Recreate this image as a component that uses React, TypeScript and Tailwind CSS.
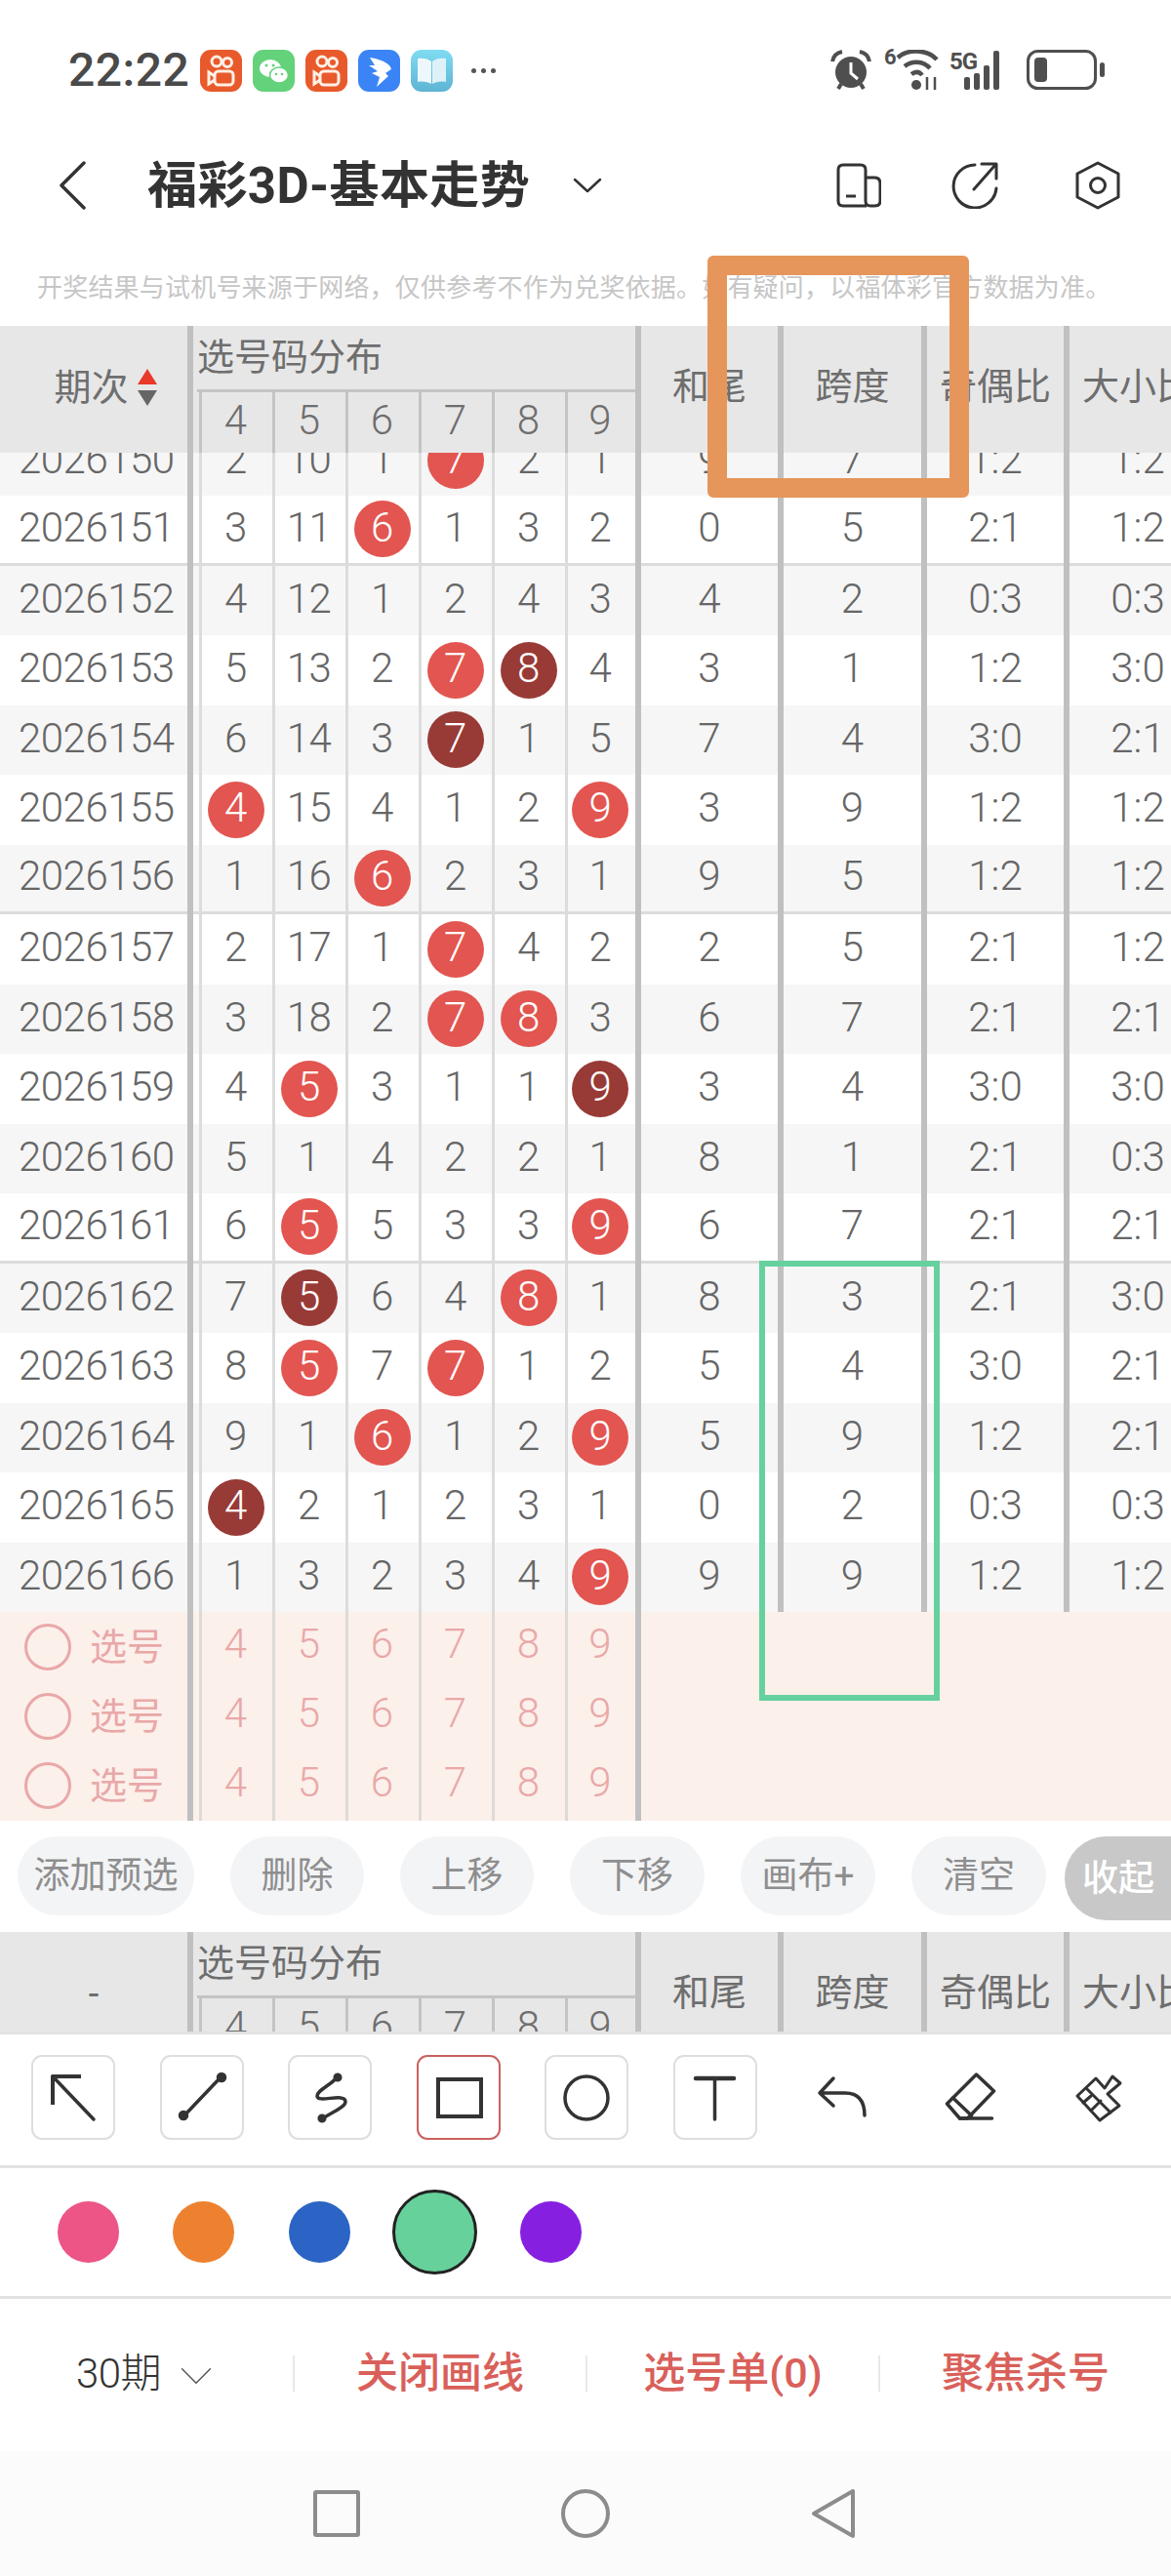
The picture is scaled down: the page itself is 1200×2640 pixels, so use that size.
import React from 'react';

type Mark = '' | 'r' | 'd';
type Row = { no: string; nums: string[]; marks: Record<number, Mark>; sum: string; span: string; odd: string; big: string; line?: boolean };

const mk = (no: string, nums: string, marks: Record<number, Mark>, sum: string, span: string, odd: string, big: string, line = false): Row => ({
  no, nums: nums.split(' '), marks, sum, span, odd, big, line,
});

const rows: Row[] = [
  mk('2026150', '2 10 1 7 2 1', { 3: 'r' }, '9', '7', '1:2', '1:2'),
  mk('2026151', '3 11 6 1 3 2', { 2: 'r' }, '0', '5', '2:1', '1:2', true),
  mk('2026152', '4 12 1 2 4 3', {}, '4', '2', '0:3', '0:3'),
  mk('2026153', '5 13 2 7 8 4', { 3: 'r', 4: 'd' }, '3', '1', '1:2', '3:0'),
  mk('2026154', '6 14 3 7 1 5', { 3: 'd' }, '7', '4', '3:0', '2:1'),
  mk('2026155', '4 15 4 1 2 9', { 0: 'r', 5: 'r' }, '3', '9', '1:2', '1:2'),
  mk('2026156', '1 16 6 2 3 1', { 2: 'r' }, '9', '5', '1:2', '1:2', true),
  mk('2026157', '2 17 1 7 4 2', { 3: 'r' }, '2', '5', '2:1', '1:2'),
  mk('2026158', '3 18 2 7 8 3', { 3: 'r', 4: 'r' }, '6', '7', '2:1', '2:1'),
  mk('2026159', '4 5 3 1 1 9', { 1: 'r', 5: 'd' }, '3', '4', '3:0', '3:0'),
  mk('2026160', '5 1 4 2 2 1', {}, '8', '1', '2:1', '0:3'),
  mk('2026161', '6 5 5 3 3 9', { 1: 'r', 5: 'r' }, '6', '7', '2:1', '2:1', true),
  mk('2026162', '7 5 6 4 8 1', { 1: 'd', 4: 'r' }, '8', '3', '2:1', '3:0'),
  mk('2026163', '8 5 7 7 1 2', { 1: 'r', 3: 'r' }, '5', '4', '3:0', '2:1'),
  mk('2026164', '9 1 6 1 2 9', { 2: 'r', 5: 'r' }, '5', '9', '1:2', '2:1'),
  mk('2026165', '4 2 1 2 3 1', { 0: 'd' }, '0', '2', '0:3', '0:3'),
  mk('2026166', '1 3 2 3 4 9', { 5: 'r' }, '9', '9', '1:2', '1:2'),
];

const heads = ['4', '5', '6', '7', '8', '9'];

function Sep() {
  return <div className="w-[6px] shrink-0 self-stretch bg-[#c0c0c0]" />;
}

function TableHead({ first }: { first: React.ReactNode }) {
  return (
    <div className="flex h-[130px] w-[1200px] shrink-0 bg-[#e7e7e7] text-[38px] leading-none text-[#6e6e6e]">
      <div className="flex w-[192px] shrink-0 items-center justify-center pb-[4px]">{first}</div>
      <Sep />
      <div className="flex w-[453px] shrink-0 flex-col">
        <div className="flex h-[65px] items-center pb-[2px] pl-[4px]">选号码分布</div>
        <div className="ml-[4px] h-[3px] bg-[#c4c4c4]" />
        <div className="ml-[6px] flex flex-1 text-[42px] font-light">
          {heads.map((h, i) => (
            <div key={h} className={`flex items-center justify-center border-l-[3px] border-[#c4c4c4] pb-[5px] pr-[3px] ${i === 5 ? 'w-[72px]' : 'w-[75px]'}`}>
              {h}
            </div>
          ))}
        </div>
      </div>
      <Sep />
      <HeadCell w="w-[140px]">和尾</HeadCell>
      <Sep />
      <HeadCell w="w-[141px]">跨度</HeadCell>
      <Sep />
      <HeadCell w="w-[140px]">奇偶比</HeadCell>
      <Sep />
      <HeadCell w="w-[140px]">大小比</HeadCell>
    </div>
  );
}

function HeadCell({ w, children }: { w: string; children: React.ReactNode }) {
  return <div className={`flex shrink-0 items-center justify-center whitespace-nowrap pb-[6px] ${w}`}>{children}</div>;
}

function DataRow({ row, index }: { row: Row; index: number }) {
  const bg = index % 2 === 0 ? 'bg-[#f6f6f6]' : 'bg-white';
  const line = row.line ? 'border-b-[3px] border-b-[#dcdcdc]' : '';
  const val = `flex shrink-0 items-center justify-center pb-[3px] ${line}`;
  return (
    <div className={`flex h-[71.5px] w-[1200px] text-[42px] font-light leading-none text-[#666] ${bg}`}>
      <div className={`flex w-[192px] shrink-0 items-center pb-[3px] pl-[19px] tracking-[-0.5px] ${line}`}>{row.no}</div>
      <Sep />
      <div className={`w-[6px] shrink-0 ${line}`} />
      {row.nums.map((n, i) => {
        const m = row.marks[i];
        return (
          <div key={i} className={`flex shrink-0 items-center justify-center border-l-[3px] border-l-[#dcdcdc] pr-[3px] tracking-[-0.5px] ${i === 5 ? 'w-[72px]' : 'w-[75px]'} ${line}`}>
            {m ? (
              <span className={`flex h-[58px] w-[58px] shrink-0 items-center justify-center rounded-full pb-[3px] text-white ${m === 'r' ? 'bg-[#e25550]' : 'bg-[#983a36]'}`}>{n}</span>
            ) : (
              <span className="pb-[3px]">{n}</span>
            )}
          </div>
        );
      })}
      <Sep />
      <div className={`w-[140px] ${val}`}>{row.sum}</div>
      <Sep />
      <div className={`w-[141px] ${val}`}>{row.span}</div>
      <Sep />
      <div className={`w-[140px] ${val}`}>{row.odd}</div>
      <Sep />
      <div className={`w-[104px] pl-[36px] ${val}`}>{row.big}</div>
    </div>
  );
}

function PickRow() {
  return (
    <div className="flex h-[71.33px] w-[657px] text-[38px] font-light leading-none text-[#e9a8a8]">
      <div className="flex w-[192px] shrink-0 items-center pl-[25px]">
        <span className="h-[48px] w-[48px] shrink-0 rounded-full border-[3px] border-[#e9a8a8]" />
        <span className="ml-[19px] font-normal">选号</span>
      </div>
      <Sep />
      <div className="w-[6px] shrink-0" />
      {heads.map((h, i) => (
        <div key={h} className={`flex shrink-0 items-center justify-center border-l-[3px] border-l-[#dedad7] pb-[6px] pr-[3px] text-[42px] ${i === 5 ? 'w-[72px]' : 'w-[75px]'}`}>
          {h}
        </div>
      ))}
      <Sep />
    </div>
  );
}

function AppTile({ className, children }: { className: string; children: React.ReactNode }) {
  return (
    <div className={`h-[43px] w-[43px] shrink-0 overflow-hidden rounded-[11px] ${className}`}>
      <svg viewBox="0 0 43 43" className="h-full w-full">{children}</svg>
    </div>
  );
}

function KuaiIcon() {
  return (
    <AppTile className="bg-[#e85a2c]">
      <g fill="none" stroke="#fff0e6" strokeWidth="3">
        <circle cx="17" cy="12" r="5" />
        <circle cx="28" cy="13" r="4.5" />
        <rect x="15" y="22" width="19" height="14" rx="4" />
        <path d="M15 27 L9 23 V35 L15 31" />
      </g>
    </AppTile>
  );
}

function ToolBtn({ active, children }: { active?: boolean; children: React.ReactNode }) {
  return (
    <div className={`h-[87px] w-[86px] shrink-0 rounded-[11px] border-2 ${active ? 'border-[#c9625f]' : 'border-[#dedede]'}`}>
      <svg viewBox="0 0 86 87" className="-m-[2px] h-[87px] w-[86px]" fill="none" stroke="#333" strokeWidth="3.5" strokeLinecap="round" strokeLinejoin="round">
        {children}
      </svg>
    </div>
  );
}

function FreeIcon({ children }: { children: React.ReactNode }) {
  return (
    <div className="h-[87px] w-[86px] shrink-0">
      <svg viewBox="0 0 86 87" className="h-[87px] w-[86px]" fill="none" stroke="#333" strokeWidth="3.5" strokeLinecap="round" strokeLinejoin="round">
        {children}
      </svg>
    </div>
  );
}

const chips = [
  { t: '添加预选', w: 'w-[181px]' },
  { t: '删除', w: 'w-[137px]' },
  { t: '上移', w: 'w-[137px]' },
  { t: '下移', w: 'w-[138px]' },
  { t: '画布+', w: 'w-[138px]' },
  { t: '清空', w: 'w-[138px]' },
];

export default function App() {
  return (
    <div className="relative flex h-[2640px] w-[1200px] flex-col overflow-hidden bg-white font-['Roboto','Noto_Sans_CJK_SC',sans-serif]">
      {/* status bar */}
      <div className="flex h-[144px] shrink-0 items-center pl-[70px] pr-[68px]">
        <span className="w-[135px] shrink-0 text-[48px] font-medium leading-none tracking-[0.5px] text-[#4a4a4a]">22:22</span>
        <div className="flex gap-[11px]">
          <KuaiIcon />
          <AppTile className="bg-[#63d27a]">
            <ellipse cx="18" cy="19" rx="11" ry="9" fill="#fff" />
            <ellipse cx="27" cy="26" rx="9.5" ry="8" fill="#fff" stroke="#63d27a" strokeWidth="1.5" />
            <circle cx="14" cy="16" r="1.5" fill="#63d27a" />
            <circle cx="21" cy="16" r="1.5" fill="#63d27a" />
            <circle cx="24" cy="25" r="1.3" fill="#63d27a" />
            <circle cx="30" cy="25" r="1.3" fill="#63d27a" />
          </AppTile>
          <KuaiIcon />
          <AppTile className="bg-[#3a84f5]">
            <path d="M12 8 C20 9 33 13 34 20 L28 24 L31 27 L19 38 L22 28 L14 24 L20 22 L11 16 L17 16 Z" fill="#fff" />
          </AppTile>
          <AppTile className="bg-gradient-to-b from-[#7fdcf2] to-[#5fb4d4]">
            <path d="M7 9 C12 8 18 9 21 12 V35 C18 33 12 32 7 33 Z" fill="#eef8fc" />
            <path d="M36 9 C31 8 25 9 22 12 V35 C25 33 31 32 36 33 Z" fill="#dff1f8" />
          </AppTile>
        </div>
        <div className="ml-[19px] flex gap-[5px]">
          <span className="h-[5px] w-[5px] rounded-full bg-[#555]" />
          <span className="h-[5px] w-[5px] rounded-full bg-[#555]" />
          <span className="h-[5px] w-[5px] rounded-full bg-[#555]" />
        </div>

        <svg viewBox="0 0 42 42" className="ml-auto h-[42px] w-[42px] shrink-0">
          <circle cx="21" cy="23" r="16" fill="#4f4f4f" />
          <path d="M21 13 V24 L28 30" fill="none" stroke="#fff" strokeWidth="3" />
          <path d="M2 12 C3 6 7 3 12 2 M40 12 C39 6 35 3 30 2" fill="none" stroke="#4f4f4f" strokeWidth="4" />
          <path d="M8 40 L11 35 M34 40 L31 35" stroke="#4f4f4f" strokeWidth="4" />
        </svg>
        <div className="relative ml-[13px] h-[42px] w-[56px] shrink-0">
          <span className="absolute left-0 top-[-3px] text-[22px] font-bold leading-none text-[#4f4f4f]">6</span>
          <svg viewBox="0 0 56 42" className="h-[42px] w-[56px]" fill="none" stroke="#4f4f4f">
            <path d="M14 8 C24 -1 44 -1 54 10" strokeWidth="4.5" />
            <path d="M21 17 C28 11 40 11 47 19" strokeWidth="4.5" />
            <path d="M28 25 C32 22 36 22 39 26" strokeWidth="4.5" />
            <circle cx="33" cy="36" r="5" fill="#4f4f4f" stroke="none" />
            <path d="M44 28 V41 M52 28 V41" strokeWidth="2.5" />
          </svg>
        </div>
        <div className="relative ml-[11px] h-[42px] w-[62px] shrink-0">
          <span className="absolute left-0 top-0 text-[24px] font-bold leading-none tracking-[-1px] text-[#4f4f4f]">5G</span>
          <svg viewBox="0 0 62 42" className="h-[42px] w-[62px]" fill="#4f4f4f">
            <rect x="15" y="28" width="6" height="13" rx="2" />
            <rect x="25" y="24" width="6" height="17" rx="2" />
            <rect x="35" y="16" width="6" height="25" rx="2" />
            <rect x="45" y="1" width="6" height="40" rx="2" />
          </svg>
        </div>
        <svg viewBox="0 0 80 42" className="ml-[17px] h-[42px] w-[80px] shrink-0">
          <rect x="1.5" y="1.5" width="69" height="38" rx="10" fill="none" stroke="#4f4f4f" strokeWidth="3" />
          <rect x="8" y="8" width="13" height="25" rx="4" fill="#4f4f4f" />
          <rect x="75" y="13" width="5" height="15" rx="2.5" fill="#4f4f4f" />
        </svg>
      </div>

      {/* title bar */}
      <div className="flex h-[92px] shrink-0 items-center pl-[60px] pr-[52px]">
        <svg viewBox="0 0 28 50" className="h-[50px] w-[28px] shrink-0" fill="none" stroke="#333" strokeWidth="3.5" strokeLinecap="round" strokeLinejoin="round">
          <path d="M26 2 L3 25 L26 48" />
        </svg>
        <span className="ml-[63px] whitespace-nowrap text-[51px] font-bold leading-none tracking-[0.4px] text-[#333]">福彩3D-基本走势</span>
        <svg viewBox="0 0 30 16" className="ml-[44px] h-[16px] w-[30px] shrink-0" fill="none" stroke="#333" strokeWidth="2.5" strokeLinecap="round" strokeLinejoin="round">
          <path d="M2 2 L15 14 L28 2" />
        </svg>
        <svg viewBox="0 0 46 46" className="ml-auto h-[46px] w-[46px] shrink-0" fill="none" stroke="#333" strokeWidth="3">
          <path d="M31 44 H7 Q2 44 2 39 V7 Q2 2 7 2 H25 Q30 2 30 7 V39 Q30 44 35 44 H39 Q45 44 45 39 V21 Q45 15 39 15 H30" />
          <path d="M10 34 H20" />
        </svg>
        <svg viewBox="0 0 48 48" className="ml-[72px] h-[48px] w-[48px] shrink-0" fill="none" stroke="#333" strokeWidth="3" strokeLinecap="round" strokeLinejoin="round">
          <path d="M24 3 A22 22 0 1 0 46 27" />
          <path d="M23 28 L45 3 M31 2 H46 V17" />
        </svg>
        <svg viewBox="0 0 46 50" className="ml-[79px] h-[50px] w-[46px] shrink-0" fill="none" stroke="#333" strokeWidth="3" strokeLinejoin="round">
          <path d="M23 2 L44 13 V37 L23 48 L2 37 V13 Z" />
          <circle cx="23" cy="25" r="7.5" />
        </svg>
      </div>

      {/* notice */}
      <div className="mt-[22px] flex h-[76px] shrink-0 items-center whitespace-nowrap pb-[2px] pl-[38px] text-[26px] leading-none tracking-[0.2px] text-[#c6c6c6]">
        开奖结果与试机号来源于网络，仅供参考不作为兑奖依据。如有疑问，以福体彩官方数据为准。
      </div>

      <TableHead
        first={
          <div className="flex items-center pl-[24px]">
            <span>期次</span>
            <span className="ml-[9px] flex flex-col gap-[6px]">
              <span className="h-0 w-0 border-x-[10px] border-b-[16px] border-x-transparent border-b-[#e8392a]" />
              <span className="h-0 w-0 border-x-[10px] border-t-[16px] border-x-transparent border-t-[#666]" />
            </span>
          </div>
        }
      />

      {/* rows, the first one is scrolled half under the header */}
      <div className="h-[1188px] shrink-0 overflow-hidden">
        <div className="-mt-[27.5px]">
          {rows.map((r, i) => (
            <DataRow key={r.no} row={r} index={i} />
          ))}
        </div>
      </div>

      {/* pick rows */}
      <div className="h-[214px] shrink-0 bg-[#fcf0eb]">
        <PickRow />
        <PickRow />
        <PickRow />
      </div>

      {/* chips */}
      <div className="flex h-[114px] shrink-0 items-start overflow-hidden pl-[18px] pt-[16px]">
        <div className="flex gap-[37px]">
          {chips.map(c => (
            <div key={c.t} className={`flex h-[81px] shrink-0 items-center justify-center rounded-full bg-[#f3f4f6] text-[37px] leading-none text-[#8e8e8e] ${c.w}`}>
              {c.t}
            </div>
          ))}
        </div>
        <div className="ml-[19px] flex h-[86px] w-[160px] shrink-0 items-center rounded-full bg-[#c8c8c8] pl-[18px] text-[37px] font-medium leading-none text-white">
          收起
        </div>
      </div>

      {/* second header, cut off by the tool panel */}
      <div className="h-[102px] shrink-0 overflow-hidden">
        <TableHead first={<span>-</span>} />
      </div>

      {/* tools */}
      <div className="flex h-[140px] shrink-0 items-start gap-[45.5px] border-y-[3px] border-[#e2e2e2] pl-[32px] pt-[21px]">
        <ToolBtn>
          <path d="M51 22 H22 V51" strokeWidth="4" strokeLinecap="butt" />
          <path d="M22 22 L64 66" />
        </ToolBtn>
        <ToolBtn>
          <path d="M63 22 L24 63" />
          <circle cx="63" cy="23" r="3.5" fill="#333" />
          <circle cx="24" cy="62" r="3.5" fill="#333" />
        </ToolBtn>
        <ToolBtn>
          <path d="M51 22 C46 30 30 36 30 42 C30 50 59 38 59 48 C59 54 42 60 35 66" />
          <circle cx="51" cy="23" r="2.8" fill="#333" />
          <circle cx="35" cy="65" r="2.8" fill="#333" />
        </ToolBtn>
        <ToolBtn active>
          <rect x="22" y="25" width="44" height="38" strokeWidth="4" strokeLinejoin="miter" />
        </ToolBtn>
        <ToolBtn>
          <circle cx="43" cy="44" r="22" />
        </ToolBtn>
        <ToolBtn>
          <path d="M23 24 H62" strokeWidth="4.5" />
          <path d="M42.5 24 V66" />
        </ToolBtn>
        <FreeIcon>
          <path d="M33 24 L19 39 L33 52 M19 39 H45 Q65 39 65 62" />
        </FreeIcon>
        <FreeIcon>
          <g transform="translate(-952.5 -2106)">
            <path d="M1000 2126 L1018 2143 L991 2171 H983 L970 2156 Z" />
            <path d="M976 2150 L995 2168 M983 2171 H1016" />
          </g>
        </FreeIcon>
        <FreeIcon>
          <g transform="translate(-1084 -2106)" strokeWidth="3">
            <path d="M1140 2128 L1148 2135 L1135 2146 L1147 2158 L1127 2173 L1104 2148 L1123 2130 L1132 2140 Z" />
            <path d="M1113 2140 L1138 2165 M1110 2155 L1118 2148 M1118 2163 L1128 2153" />
          </g>
        </FreeIcon>
      </div>

      {/* colours */}
      <div className="flex h-[134px] shrink-0 items-center border-b-[3px] border-[#e2e2e2]">
        <div className="flex items-center pl-[58.5px]">
          <span className="h-[63px] w-[63px] shrink-0 rounded-full bg-[#ec5585]" />
          <span className="ml-[55.5px] h-[63px] w-[63px] shrink-0 rounded-full bg-[#ed8130]" />
          <span className="ml-[55.5px] h-[63px] w-[63px] shrink-0 rounded-full bg-[#2b64c4]" />
          <span className="ml-[43.5px] h-[87px] w-[87px] shrink-0 rounded-full border-[3px] border-[#222] bg-[#66d19b]" />
          <span className="ml-[43.5px] h-[63px] w-[63px] shrink-0 rounded-full bg-[#871fe0]" />
        </div>
      </div>

      {/* bottom actions */}
      <div className="flex h-[156px] shrink-0 items-center pb-[3px] text-[43px] leading-none">
        <div className="flex w-[300px] items-center pl-[78px] text-[42px] font-light text-[#333]">
          <span className="tracking-[-0.5px]">30期</span>
          <svg viewBox="0 0 36 20" className="ml-[19px] mt-[4px] h-[18px] w-[34px] shrink-0" fill="none" stroke="#555" strokeWidth="1.6" strokeLinecap="round" strokeLinejoin="round">
            <path d="M2 2 L18 18 L34 2" />
          </svg>
        </div>
        <span className="h-[37px] w-[2px] shrink-0 bg-[#e8e8e8]" />
        <div className="flex w-[298px] justify-center font-medium text-[#d9605a]">关闭画线</div>
        <span className="h-[37px] w-[2px] shrink-0 bg-[#e8e8e8]" />
        <div className="flex w-[298px] justify-center font-medium text-[#d9605a]">选号单(0)</div>
        <span className="h-[37px] w-[2px] shrink-0 bg-[#e8e8e8]" />
        <div className="flex w-[298px] justify-center font-medium text-[#d9605a]">聚焦杀号</div>
      </div>

      {/* nav bar */}
      <div className="flex flex-1 items-center justify-between bg-[#fbfbfb] pl-[321px] pr-[323px]">
        <span className="h-[48px] w-[48px] rounded-[3px] border-[4px] border-[#8c8c8c]" />
        <span className="h-[50px] w-[50px] rounded-full border-[4px] border-[#8c8c8c]" />
        <svg viewBox="0 0 46 52" className="h-[52px] w-[46px]" fill="none" stroke="#8c8c8c" strokeWidth="4" strokeLinejoin="round">
          <path d="M43 3 V49 L3 26 Z" />
        </svg>
      </div>

      {/* hand-drawn annotations lying on top of the table */}
      <div className="absolute left-[725px] top-[262px] h-[248px] w-[268px] rounded-[6px] border-[20px] border-[#e6965a]" />
      <div className="absolute left-[778px] top-[1292px] h-[451px] w-[185px] border-[6px] border-[#66d19e]" />
    </div>
  );
}
